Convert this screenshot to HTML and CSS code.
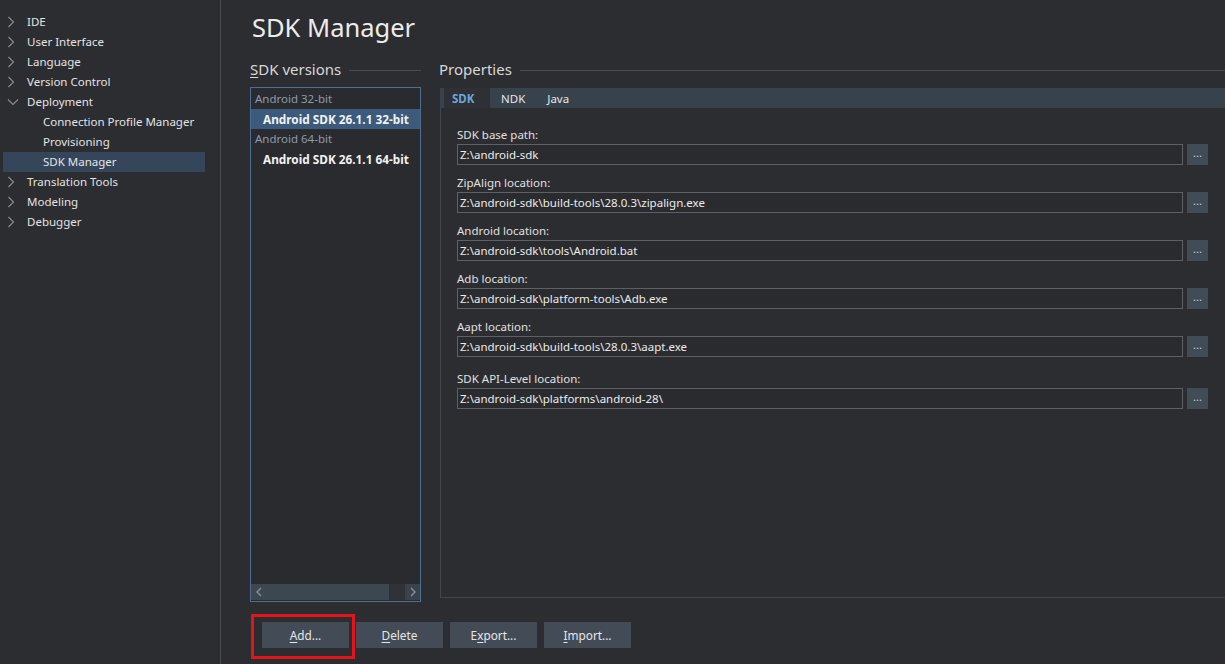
FILE: index.html
```html
<!DOCTYPE html>
<html>
<head>
<meta charset="utf-8">
<link rel="stylesheet" href="styles.css">
</head>
<body>
<div class="app">
  <nav class="tree">
    <div class="node"><span class="chev"><svg width="8" height="12" viewBox="0 0 8 12"><path d="M1.5 1 L6.5 6 L1.5 11" /></svg></span>IDE</div>
    <div class="node"><span class="chev"><svg width="8" height="12" viewBox="0 0 8 12"><path d="M1.5 1 L6.5 6 L1.5 11" /></svg></span>User Interface</div>
    <div class="node"><span class="chev"><svg width="8" height="12" viewBox="0 0 8 12"><path d="M1.5 1 L6.5 6 L1.5 11" /></svg></span>Language</div>
    <div class="node"><span class="chev"><svg width="8" height="12" viewBox="0 0 8 12"><path d="M1.5 1 L6.5 6 L1.5 11" /></svg></span>Version Control</div>
    <div class="node"><span class="chev"><svg width="12" height="8" viewBox="0 0 12 8"><path d="M1 1.5 L6 6.5 L11 1.5" /></svg></span>Deployment</div>
    <div class="node child">Connection Profile Manager</div>
    <div class="node child">Provisioning</div>
    <div class="node child selected">SDK Manager</div>
    <div class="node"><span class="chev"><svg width="8" height="12" viewBox="0 0 8 12"><path d="M1.5 1 L6.5 6 L1.5 11" /></svg></span>Translation Tools</div>
    <div class="node"><span class="chev"><svg width="8" height="12" viewBox="0 0 8 12"><path d="M1.5 1 L6.5 6 L1.5 11" /></svg></span>Modeling</div>
    <div class="node"><span class="chev"><svg width="8" height="12" viewBox="0 0 8 12"><path d="M1.5 1 L6.5 6 L1.5 11" /></svg></span>Debugger</div>
  </nav>
  <main class="main">
    <h1 class="title">SDK Manager</h1>
    <div class="columns">
      <section class="versions">
        <div class="group-label"><span><u>S</u>DK versions</span><i class="rule"></i></div>
        <div class="listbox">
          <div class="list-items">
            <div class="list-group">Android 32-bit</div>
            <div class="list-item selected">Android SDK 26.1.1 32-bit</div>
            <div class="list-group">Android 64-bit</div>
            <div class="list-item">Android SDK 26.1.1 64-bit</div>
          </div>
          <div class="hscroll">
            <span class="sb-btn left"><svg width="6" height="10" viewBox="0 0 6 10"><path d="M5 1 L1 5 L5 9"/></svg></span>
            <span class="sb-thumb"></span>
            <span class="sb-gap"></span>
            <span class="sb-btn right"><svg width="6" height="10" viewBox="0 0 6 10"><path d="M1 1 L5 5 L1 9"/></svg></span>
          </div>
        </div>
      </section>
      <section class="props">
        <div class="group-label"><span>Properties</span><i class="rule"></i></div>
        <div class="tabs">
          <div class="tabstrip">
            <span class="tab active">SDK</span>
            <span class="tab">NDK</span>
            <span class="tab">Java</span>
          </div>
          <div class="tabpanel">
            <div class="field">
              <label>SDK base path:</label>
              <div class="field-row"><div class="input">Z:\android-sdk</div><span class="browse">...</span></div>
            </div>
            <div class="field">
              <label>ZipAlign location:</label>
              <div class="field-row"><div class="input">Z:\android-sdk\build-tools\28.0.3\zipalign.exe</div><span class="browse">...</span></div>
            </div>
            <div class="field">
              <label>Android location:</label>
              <div class="field-row"><div class="input">Z:\android-sdk\tools\Android.bat</div><span class="browse">...</span></div>
            </div>
            <div class="field">
              <label>Adb location:</label>
              <div class="field-row"><div class="input">Z:\android-sdk\platform-tools\Adb.exe</div><span class="browse">...</span></div>
            </div>
            <div class="field">
              <label>Aapt location:</label>
              <div class="field-row"><div class="input">Z:\android-sdk\build-tools\28.0.3\aapt.exe</div><span class="browse">...</span></div>
            </div>
            <div class="field last">
              <label>SDK API-Level location:</label>
              <div class="field-row"><div class="input">Z:\android-sdk\platforms\android-28\</div><span class="browse">...</span></div>
            </div>
          </div>
        </div>
      </section>
    </div>
    <div class="buttons">
      <div class="marked">
        <button class="btn"><u>A</u>dd...</button>
        <span class="redbox"></span>
      </div>
      <button class="btn"><u>D</u>elete</button>
      <button class="btn">E<u>x</u>port...</button>
      <button class="btn"><u>I</u>mport...</button>
    </div>
  </main>
</div>
</body>
</html>
```

FILE: styles.css
```css
* { box-sizing: border-box; }
html, body {
  margin: 0;
  padding: 0;
  width: 1225px;
  height: 664px;
  overflow: hidden;
  background: #2c2d31;
  font-family: "Noto Sans", "Open Sans", sans-serif;
  font-size: 11.5px;
  color: #e6e6e6;
}
.app {
  display: flex;
  height: 664px;
}
.tree {
  width: 221px;
  flex: none;
  border-right: 1px solid #4a4b50;
  padding-top: 12px;
}
.node {
  height: 20px;
  line-height: 20px;
  display: flex;
  align-items: center;
  white-space: nowrap;
  color: #e4e4e4;
}
.chev {
  width: 27px;
  flex: none;
  display: flex;
  align-items: center;
  padding-left: 7px;
}
.chev svg path {
  fill: none;
  stroke: #8c8d91;
  stroke-width: 1.1;
}
.node.child {
  padding-left: 43px;
}
.node.selected {
  margin-left: 3px;
  width: 202px;
  padding-left: 40px;
  background: #36465a;
}
.main {
  flex: 1;
  padding-left: 29px;
  display: flex;
  flex-direction: column;
}
.title {
  margin: 11px 0 0 2px;
  font-size: 25.5px;
  font-weight: normal;
  line-height: 32px;
  color: #ececec;
  height: 32px;
}
.columns {
  display: flex;
  gap: 18px;
  margin-top: 15px;
}
.group-label {
  display: flex;
  align-items: center;
  height: 22px;
  font-size: 15px;
  color: #d8d8d8;
  white-space: nowrap;
}
.group-label u { text-decoration-thickness: 1px; text-underline-offset: 2px; }
.group-label .rule {
  flex: 1;
  height: 1px;
  background: #494a4f;
  margin-left: 8px;
  margin-top: 2px;
}
.versions {
  width: 171px;
  flex: none;
}
.listbox {
  margin-top: 7px;
  height: 515px;
  border: 1px solid #4d6e91;
  background: #2a2b2f;
  display: flex;
  flex-direction: column;
}
.list-items {
  flex: 1;
  padding-top: 1px;
}
.list-group {
  height: 20px;
  line-height: 20px;
  padding-left: 4px;
  color: #8d9bab;
}
.list-item {
  height: 20px;
  line-height: 20px;
  padding-left: 12px;
  font-weight: bold;
  font-size: 11.8px;
  color: #f2f2f2;
  white-space: nowrap;
}
.list-item.selected {
  background: #3c5b7c;
}
.hscroll {
  height: 16px;
  display: flex;
  margin-bottom: 1px;
}
.sb-btn {
  width: 15px;
  display: flex;
  align-items: center;
  justify-content: center;
  background: #3a434c;
}
.sb-btn.left { background: #3d4750; }
.sb-btn svg path { fill: none; stroke: #8a949e; stroke-width: 1.3; }
.sb-thumb {
  flex: 1;
  background: #3d4750;
}
.sb-gap {
  width: 16px;
  background: #2f3237;
}
.props {
  flex: 1;
  display: flex;
  flex-direction: column;
}
.tabs {
  margin-top: 8px;
  height: 510px;
  display: flex;
  flex-direction: column;
  margin-left: 1px;
}
.tabstrip {
  height: 20px;
  background: #37424c;
  display: flex;
  padding-left: 4px;
}
.tab {
  height: 20px;
  line-height: 21px;
  padding: 0 11px;
  color: #e6e6e6;
}
.tab.active {
  background: #2e3035;
  color: #6ca6da;
  font-weight: bold;
  padding: 0 12px 0 8px;
  width: 46px;
}
.tabpanel {
  flex: 1;
  border-left: 1px solid #45464b;
  border-bottom: 1px solid #45464b;
  padding: 17px 0 0 16px;
}
.field {
  display: flex;
  flex-direction: column;
  margin-bottom: 8px;
}
.field.last { margin-top: 12px; }
.field label {
  height: 19px;
  line-height: 19px;
  color: #e0e0e0;
}
.field-row {
  display: flex;
  gap: 4px;
  height: 21px;
}
.input {
  width: 726px;
  height: 21px;
  border: 1px solid #5f6064;
  background: #2a2b2f;
  line-height: 19px;
  padding-left: 2px;
  color: #ececec;
  white-space: nowrap;
}
.browse {
  width: 21px;
  height: 21px;
  background: #414c57;
  color: #c8ced4;
  text-align: center;
  line-height: 17px;
  font-size: 11px;
}
.buttons {
  display: flex;
  gap: 7px;
  margin-top: 20px;
  padding-left: 12px;
}
.marked {
  position: relative;
  display: flex;
}
.btn {
  width: 87px;
  height: 26px;
  border: none;
  background: #434c56;
  color: #e6e6e6;
  font-family: inherit;
  font-size: 11.8px;
  padding: 0;
}
.btn u { text-underline-offset: 2px; }
.redbox {
  position: absolute;
  left: -11px;
  top: -8px;
  width: 104px;
  height: 45px;
  border: 3px solid #e5141b;
}
```
